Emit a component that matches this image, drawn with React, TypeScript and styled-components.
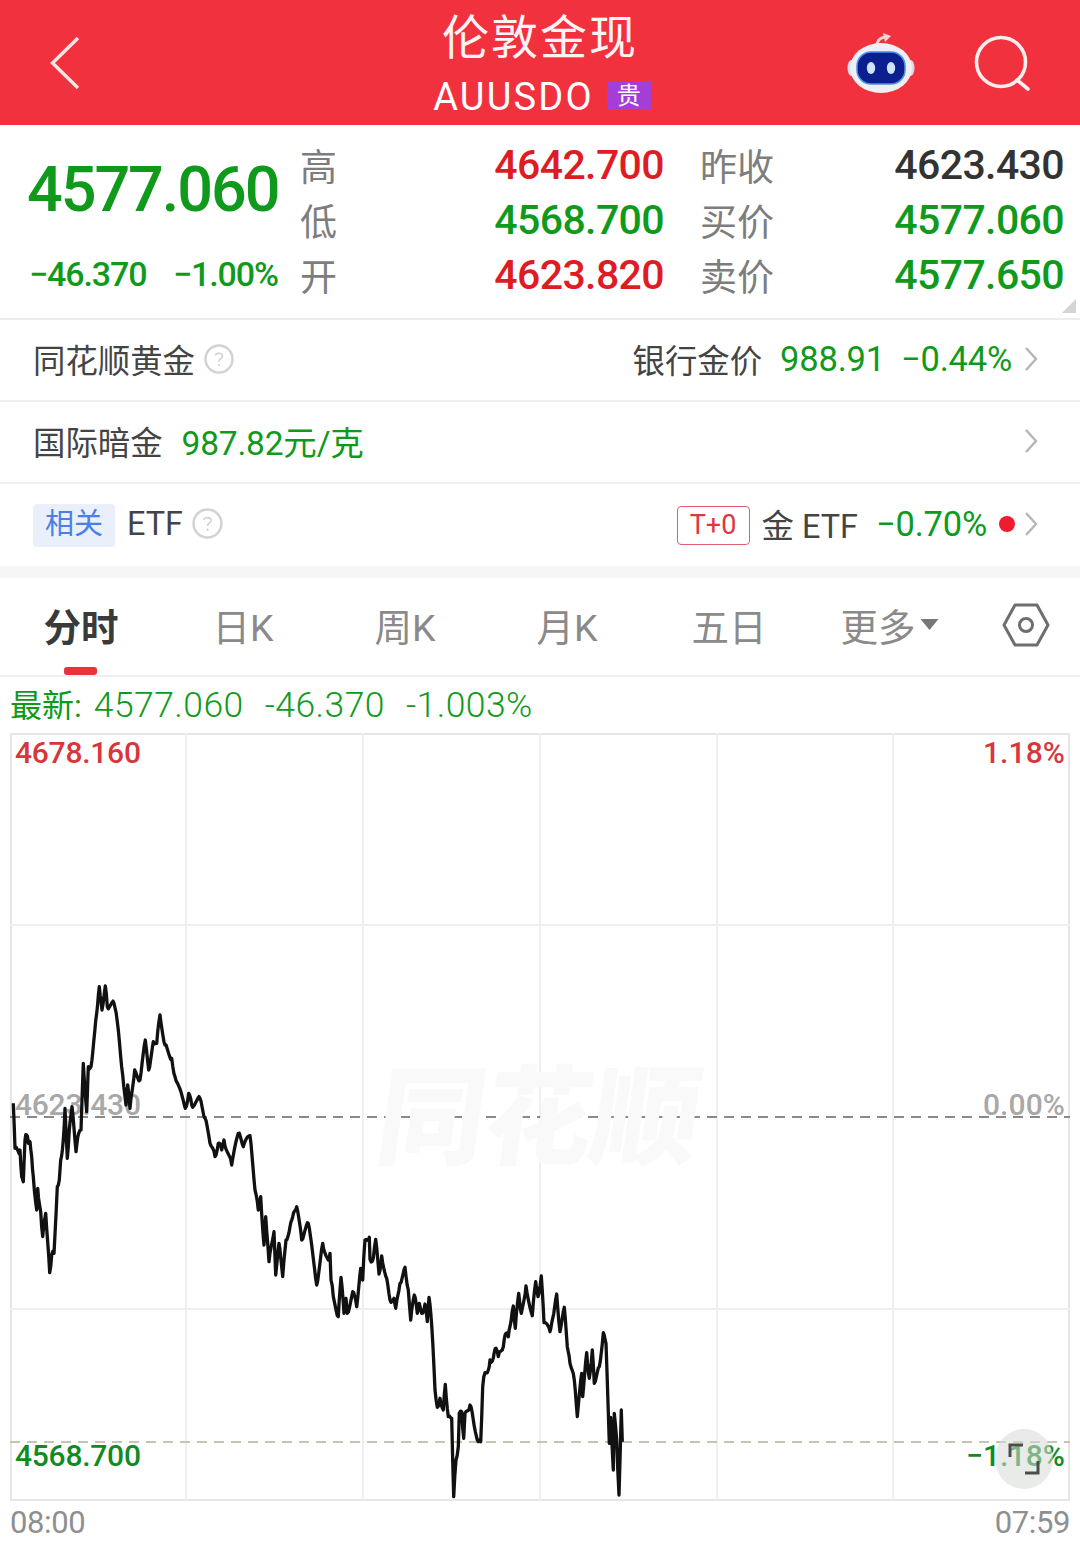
import React from "react";
import styled, { createGlobalStyle } from "styled-components";

const GREEN = "#0f9a1c";
const RED = "#de1c24";
const GRAY = "#7d7d7d";
const DARK = "#333333";

const Global = createGlobalStyle`
  html, body { margin: 0; padding: 0; background: #fff; }
  body { font-family: Roboto, "Noto Sans CJK SC", sans-serif; }
  * { box-sizing: border-box; }
`;

const Page = styled.div`
  width: 1080px;
  height: 1543px;
  overflow: hidden;
  background: #fff;
  display: flex;
  flex-direction: column;
`;

const Header = styled.header`
  height: 125px;
  flex: none;
  background: #f2313f;
  display: grid;
  grid-template-columns: 1fr auto 1fr;
  align-items: center;
  padding: 0 50px;
  color: #fff;
`;
const HeaderRight = styled.div`
  display: flex;
  justify-content: flex-end;
  align-items: center;
  gap: 59px;
`;
const TitleBlock = styled.div`
  display: flex;
  flex-direction: column;
  align-items: center;
`;
const Title = styled.div`
  font-size: 47px;
  line-height: 62px;
  letter-spacing: 2px;
  margin-top: 4px;
  opacity: 0.94;
`;
const SubTitle = styled.div`
  display: flex;
  align-items: center;
  gap: 13px;
  font-size: 38px;
  line-height: 50px;
  letter-spacing: 2.2px;
  margin-top: 3px;
  font-weight: 400;
  margin-left: 4px;
`;
const Badge = styled.span`
  width: 44px;
  height: 28px;
  margin-top: -2px;
  background: #a33fd6;
  font-size: 24px;
  line-height: 28px;
  letter-spacing: 0;
  text-align: center;
  font-weight: 400;
`;

const Quote = styled.section`
  position: relative;
  height: 195px;
  flex: none;
  display: flex;
  padding: 16px 16px 0 27px;
  border-bottom: 2px solid #ececec;
`;
const PriceCol = styled.div`
  width: 251px;
  margin-right: 22px;
  display: flex;
  flex-direction: column;
  color: ${GREEN};
`;
const BigPrice = styled.div`
  font-size: 63px;
  line-height: 72px;
  margin-top: 13px;
  font-weight: 500;
  letter-spacing: -2.1px;
  white-space: nowrap;
`;
const PriceDelta = styled.div`
  display: flex;
  justify-content: space-between;
  font-size: 34px;
  line-height: 40px;
  margin-top: 28px;
  padding-left: 2px;
  letter-spacing: -1.1px;
  font-weight: 500;
  white-space: nowrap;
`;
const QuoteGrid = styled.div`
  flex: 1;
  display: grid;
  grid-template-columns: 36px 328px 75px 1fr;
  grid-auto-rows: 55px;
  align-items: center;
`;
const QuoteLabel = styled.div<{ $gap?: boolean }>`
  font-size: 37px;
  line-height: 55px;
  color: ${GRAY};
  white-space: nowrap;
  margin-left: ${(p) => (p.$gap ? "36px" : "0")};
`;
const QuoteValue = styled.div<{ $color: string }>`
  font-size: 41px;
  line-height: 49px;
  padding-bottom: 6px;
  font-weight: 500;
  letter-spacing: -0.6px;
  text-align: right;
  color: ${(p) => p.$color};
  white-space: nowrap;
`;
const Corner = styled.div`
  position: absolute;
  right: 4px;
  bottom: 5px;
  width: 14px;
  height: 14px;
  background: #d4d4d4;
  clip-path: polygon(100% 0, 100% 100%, 0 100%);
`;

const InfoRow = styled.div<{ $bare?: boolean }>`
  height: 82px;
  flex: none;
  display: flex;
  align-items: center;
  justify-content: space-between;
  padding: 0 42px 3px 33px;
  border-bottom: ${(p) => (p.$bare ? "none" : "2px solid #efefef")};
`;
const RowGroup = styled.div`
  display: flex;
  align-items: center;
`;
const RowLabel = styled.span<{ $gap?: number }>`
  font-size: 32.4px;
  color: #444;
  white-space: nowrap;
  margin-right: ${(p) => p.$gap ?? 0}px;
`;
const RowNum = styled.span<{ $gap?: number; $size?: number }>`
  font-size: ${(p) => p.$size ?? 34.5}px;
  color: ${GREEN};
  white-space: nowrap;
  letter-spacing: -0.2px;
  margin-right: ${(p) => p.$gap ?? 0}px;
`;
const Tag = styled.span`
  width: 82px;
  height: 43px;
  margin: 3px 12px 0 0;
  background: #e9f0fb;
  border-radius: 4px;
  color: #4a7fe6;
  font-size: 29px;
  line-height: 41px;
  text-align: center;
`;
const TBox = styled.span`
  width: 73px;
  height: 39px;
  border: 1.5px solid #e0606a;
  border-radius: 4px;
  color: #e0353f;
  font-size: 27px;
  line-height: 36px;
  text-align: center;
  margin: 3px 12px 0 0;
`;
const Dot = styled.span`
  width: 16px;
  height: 16px;
  border-radius: 50%;
  background: #ee1c2e;
  margin: 0 9px 0 12px;
`;
const Gap = styled.div`
  height: 12px;
  flex: none;
  background: #f6f6f6;
`;

const Tabs = styled.nav`
  position: relative;
  height: 99px;
  flex: none;
  display: grid;
  grid-template-columns: repeat(6, 162px) 1fr;
  align-items: center;
  border-bottom: 2px solid #efefef;
  padding-bottom: 4px;
`;
const TabItem = styled.div<{ $active?: boolean }>`
  display: flex;
  justify-content: center;
  align-items: center;
  gap: 5px;
  font-size: 37.5px;
  font-weight: ${(p) => (p.$active ? 700 : 400)};
  color: ${(p) => (p.$active ? "#3a3a3a" : "#8a8a8a")};
  white-space: nowrap;
`;
const Caret = styled.span`
  width: 18px;
  height: 11px;
  margin-right: 3px;
  background: #777;
  clip-path: polygon(0 0, 100% 0, 50% 100%);
`;
const Underline = styled.span`
  position: absolute;
  left: 64px;
  bottom: 0;
  width: 33px;
  height: 8px;
  background: #ea3339;
  border-radius: 3px;
`;
const SettingCell = styled.div`
  display: flex;
  justify-content: flex-start;
  padding-left: 30px;
`;

const Latest = styled.div`
  height: 56px;
  flex: none;
  display: flex;
  align-items: baseline;
  gap: 21px;
  padding: 6px 0 0 10px;
  font-size: 35.5px;
  line-height: 44px;
  letter-spacing: 0.45px;
  font-weight: 300;
  color: ${GREEN};
  white-space: nowrap;
`;
const LatestTag = styled.span`
  font-size: 32px;
  font-weight: 400;
  letter-spacing: 0;
  margin-right: 12px;
`;

const Chart = styled.div`
  position: relative;
  width: 1060px;
  height: 768px;
  margin: 0 10px;
  flex: none;
`;
const ChartSvg = styled.svg`
  display: block;
`;
const OverlaySvg = styled.svg`
  position: absolute;
  left: 0;
  top: 0;
`;
const Watermark = styled.div`
  position: absolute;
  left: 368px;
  top: 326px;
  font-size: 108px;
  line-height: 120px;
  font-weight: 900;
  letter-spacing: -1px;
  color: #f9f9f9;
  transform: skewX(-8deg);
  white-space: nowrap;
`;
const AxisLabel = styled.span<{ $color: string; $top: number; $right?: boolean }>`
  position: absolute;
  top: ${(p) => p.$top}px;
  ${(p) => (p.$right ? "right: 5px;" : "left: 5px;")}
  font-size: 30px;
  line-height: 36px;
  font-weight: 500;
  letter-spacing: ${(p) => (p.$right ? "0.1px" : "-0.25px")};
  color: ${(p) => p.$color};
  white-space: nowrap;
`;
const ExpandBtn = styled.div`
  position: absolute;
  left: 985px;
  top: 696px;
  width: 58px;
  height: 60px;
  border-radius: 50%;
  background: rgba(214, 218, 214, 0.55);
  display: flex;
  align-items: center;
  justify-content: center;
`;
const TimeAxis = styled.div`
  flex: 1;
  display: flex;
  justify-content: space-between;
  padding: 3px 10px 0 10px;
  font-size: 31px;
  line-height: 38px;
  letter-spacing: -0.4px;
  color: #8f8f8f;
`;

const a: number[][] = [
  [40,400],[45,535],[55,545],[60,540],[65,620],[70,635],[75,510],[80,495],[85,520],[90,515],[95,560],[100,620],[110,720],[113,655],[118,700],[122,725],[128,800],[137,730],[149,908],[155,855],[162,850],[172,650],[178,630],[182,570],[190,510],[195,415],[202,565],[208,480],[216,410],[228,545],[236,490],[243,480],[250,280],[260,425],[265,290],[273,290],[290,130],[298,50],[306,120],[316,48],[322,110],[342,100],[352,155],[368,315],[378,405],[383,345],[390,415],[404,300],[420,330],[436,210],[446,300],[460,215],[470,220],[480,135],[495,225],[515,265],[525,320],[556,415],[566,370],[575,405],[600,385],[615,445],[630,520],[645,560],[655,520],[665,540],[672,510],[695,585],[715,490],[730,530],[750,497],[765,660],[775,720],[782,680],[792,825],[797,740],[807,875],[822,785],[827,915],[837,820],[848,920],[858,810],[870,770],[878,740],[890,710],[905,810],[925,760],[950,945],[968,820],[985,870],
];
const b: number[][] = [
  [0,160],[3,240],[10,290],[25,350],[33,232],[42,340],[48,295],[52,340],[68,275],[80,320],[92,205],[98,240],[105,120],[118,112],[120,178],[130,175],[137,118],[147,222],[155,168],[170,235],[180,300],[192,295],[197,325],[210,250],[225,202],[235,270],[242,360],[253,285],[262,340],[268,310],[275,340],[285,312],[292,365],[297,292],[305,375],[315,570],[322,622],[330,595],[340,630],[346,553],[355,650],[365,655],[371,890],[378,780],[385,740],[388,640],[395,635],[401,715],[405,640],[420,615],[430,660],[445,725],[452,725],[458,560],[465,518],[475,510],[480,480],[490,475],[498,445],[505,470],[520,440],[528,400],[535,410],[543,365],[550,318],[556,385],[566,280],[574,340],[588,258],[607,347],[617,245],[624,290],[634,228],[642,368],[660,395],[668,355],[680,282],[690,395],[703,322],[712,440],[720,490],[733,540],[742,650],[755,520],[758,590],[770,458],[778,535],[787,450],[793,550],[808,500],[820,398],[828,430],[838,730],[842,652],[850,810],[853,640],[860,720],[867,885],[874,630],[877,725],
];

const traced = [
  ...a.map(([x, y]) => [x / 3 - 10, 970 + y / 3 - 733]),
  ...b.map(([x, y]) => [330 + x / 3 - 10, 1200 + y / 3 - 733]),
];
const linePoints = traced
  .flatMap(([x, y], i) => {
    const next = traced[i + 1];
    if (!next) return [`${x.toFixed(1)},${y.toFixed(1)}`];
    const steps = Math.max(1, Math.round(Math.abs(next[0] - x)));
    const out: string[] = [];
    for (let s = 0; s < steps; s++) {
      const t = s / steps;
      const n = s === 0 ? 0 : Math.sin((x + s) * 12.9898 + i * 78.233) * 3;
      out.push(`${(x + (next[0] - x) * t).toFixed(1)},${(y + (next[1] - y) * t + n).toFixed(1)}`);
    }
    return out;
  })
  .join(" ");

const Chevron = () => (
  <svg width="14" height="26" viewBox="0 0 14 26" fill="none" stroke="#b5b5b5" strokeWidth="2.4" style={{ flex: "none" }}>
    <path d="M2 2 L12 13 L2 24" />
  </svg>
);
const Help = ({ ml, size = 30 }: { ml: number; size?: number }) => (
  <svg width={size} height={size} viewBox="0 0 30 30" fill="none" style={{ marginLeft: ml, flex: "none" }}>
    <circle cx="15" cy="15" r="13.5" stroke="#d2d2d2" strokeWidth="2.4" />
    <path d="M11.5 11.5 C11.5 8.5 18.5 8.5 18.5 12 C18.5 14.5 15 14.5 15 17.5" stroke="#d2d2d2" strokeWidth="1.6" />
    <circle cx="15" cy="21" r="1.1" fill="#d2d2d2" />
  </svg>
);

export default function App() {
  return (
    <Page>
      <Global />
      <Header>
        <svg width="30" height="54" viewBox="0 0 30 54" fill="none" stroke="#fbe6e6" strokeWidth="3.4">
          <path d="M28 2 L2.5 27 L28 52" />
        </svg>
        <TitleBlock>
          <Title>伦敦金现</Title>
          <SubTitle>
            AUUSDO<Badge>贵</Badge>
          </SubTitle>
        </TitleBlock>
        <HeaderRight>
          <svg width="68" height="62" viewBox="0 0 68 62" fill="none">
            <path d="M30 14 C30 8 34 5 39 5" stroke="#f7d4d4" strokeWidth="3" />
            <path d="M36 1 L44 4 L38 10 Z" fill="#f7d4d4" />
            <ellipse cx="4.5" cy="36" rx="4" ry="8" fill="#d7dde6" />
            <ellipse cx="63.5" cy="36" rx="4" ry="8" fill="#d7dde6" />
            <ellipse cx="34" cy="36" rx="31" ry="25" fill="#eef0f4" />
            <rect x="10" y="20" width="48" height="32" rx="14" fill="#0b1f8f" stroke="#4f8fe8" strokeWidth="1.5" />
            <ellipse cx="24" cy="36" rx="4.2" ry="6" fill="#cfe4ff" />
            <ellipse cx="44" cy="36" rx="4.2" ry="6" fill="#cfe4ff" />
          </svg>
          <svg width="56" height="56" viewBox="0 0 56 56" fill="none" stroke="#fdeeee" strokeWidth="3.6">
            <circle cx="27" cy="27" r="24.5" />
            <path d="M43 45 L54 54" strokeLinecap="round" />
          </svg>
        </HeaderRight>
      </Header>

      <Quote>
        <PriceCol>
          <BigPrice>4577.060</BigPrice>
          <PriceDelta>
            <span>−46.370</span>
            <span>−1.00%</span>
          </PriceDelta>
        </PriceCol>
        <QuoteGrid>
          <QuoteLabel>高</QuoteLabel>
          <QuoteValue $color={RED}>4642.700</QuoteValue>
          <QuoteLabel $gap>昨收</QuoteLabel>
          <QuoteValue $color={DARK}>4623.430</QuoteValue>
          <QuoteLabel>低</QuoteLabel>
          <QuoteValue $color={GREEN}>4568.700</QuoteValue>
          <QuoteLabel $gap>买价</QuoteLabel>
          <QuoteValue $color={GREEN}>4577.060</QuoteValue>
          <QuoteLabel>开</QuoteLabel>
          <QuoteValue $color={RED}>4623.820</QuoteValue>
          <QuoteLabel $gap>卖价</QuoteLabel>
          <QuoteValue $color={GREEN}>4577.650</QuoteValue>
        </QuoteGrid>
        <Corner />
      </Quote>

      <InfoRow>
        <RowGroup>
          <RowLabel>同花顺黄金</RowLabel>
          <Help ml={9} />
        </RowGroup>
        <RowGroup>
          <RowLabel $gap={18}>银行金价</RowLabel>
          <RowNum $gap={16}>988.91</RowNum>
          <RowNum $gap={12}>−0.44%</RowNum>
          <Chevron />
        </RowGroup>
      </InfoRow>
      <InfoRow>
        <RowGroup>
          <RowLabel $gap={19}>国际暗金</RowLabel>
          <RowNum $size={33.5}>987.82元/克</RowNum>
        </RowGroup>
        <Chevron />
      </InfoRow>
      <InfoRow $bare>
        <RowGroup>
          <Tag>相关</Tag>
          <RowLabel>ETF</RowLabel>
          <Help ml={9} size={31} />
        </RowGroup>
        <RowGroup>
          <TBox>T+0</TBox>
          <RowLabel $gap={18}>金 ETF</RowLabel>
          <RowNum>−0.70%</RowNum>
          <Dot />
          <Chevron />
        </RowGroup>
      </InfoRow>
      <Gap />

      <Tabs>
        <TabItem $active>分时</TabItem>
        <TabItem>日K</TabItem>
        <TabItem>周K</TabItem>
        <TabItem>月K</TabItem>
        <TabItem>五日</TabItem>
        <TabItem>
          更多<Caret />
        </TabItem>
        <SettingCell>
          <svg width="48" height="44" viewBox="0 0 48 44" fill="none" stroke="#6e6e6e" strokeWidth="3">
            <path d="M13 2 H35 L46 22 L35 42 H13 L2 22 Z" strokeLinejoin="round" />
            <circle cx="24" cy="22" r="6.5" />
          </svg>
        </SettingCell>
        <Underline />
      </Tabs>

      <Latest>
        <span>
          <LatestTag>最新:</LatestTag>4577.060
        </span>
        <span>-46.370</span>
        <span>-1.003%</span>
      </Latest>

      <Chart>
        <ChartSvg width="1060" height="768" viewBox="0 0 1060 768" fill="none">
          <rect x="1" y="1" width="1058" height="766" stroke="#e6e6e6" strokeWidth="2" />
          {[176, 353, 530, 707, 883].map((x) => (
            <line key={x} x1={x} y1="0" x2={x} y2="767" stroke="#efefef" strokeWidth="2" />
          ))}
          {[192, 576].map((y) => (
            <line key={y} x1="0" y1={y} x2="1060" y2={y} stroke="#efefef" strokeWidth="2" />
          ))}
          <line x1="0" y1="384" x2="1060" y2="384" stroke="#8a8a8a" strokeWidth="2" strokeDasharray="10 7" />
          <line x1="0" y1="709" x2="1060" y2="709" stroke="#c4c4b8" strokeWidth="2" strokeDasharray="10 7" />
        </ChartSvg>
        <Watermark>同花顺</Watermark>
        <AxisLabel $color="#d9363c" $top={2}>4678.160</AxisLabel>
        <AxisLabel $color="#d9363c" $top={2} $right>1.18%</AxisLabel>
        <AxisLabel $color="#a8a8a8" $top={354}>4623.430</AxisLabel>
        <AxisLabel $color="#a8a8a8" $top={354} $right>0.00%</AxisLabel>
        <AxisLabel $color="#128a24" $top={705}>4568.700</AxisLabel>
        <AxisLabel $color="#128a24" $top={705} $right>−1.18%</AxisLabel>
        <OverlaySvg width="1060" height="768" viewBox="0 0 1060 768" fill="none">
          <polyline points={linePoints} stroke="#111" strokeWidth="3.3" strokeLinejoin="round" />
        </OverlaySvg>
        <ExpandBtn>
          <svg width="32" height="32" viewBox="0 0 32 32" fill="none" stroke="#4a4f4c" strokeWidth="3">
            <path d="M2 14 V2 H15" />
            <path d="M30 18 V30 H17" />
          </svg>
        </ExpandBtn>
      </Chart>

      <TimeAxis>
        <span>08:00</span>
        <span>07:59</span>
      </TimeAxis>
    </Page>
  );
}
